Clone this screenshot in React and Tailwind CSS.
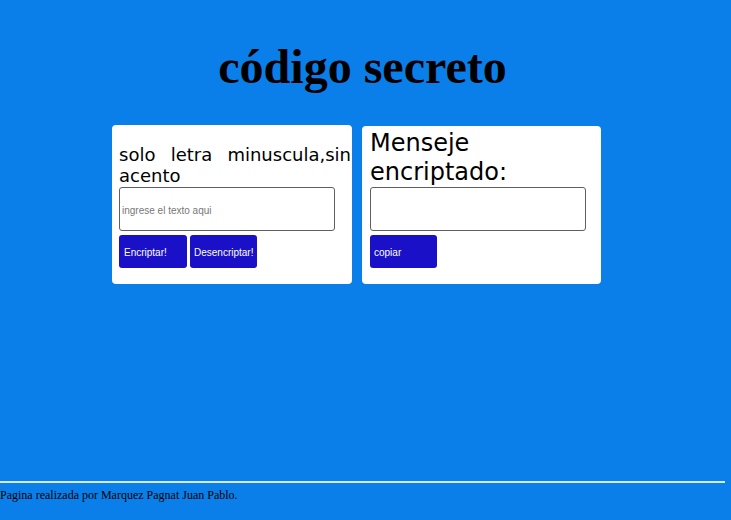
import React from "react";

export default function App() {
  return (
    <div className="w-[731px] h-[520px] bg-[#0b7fe9] flex flex-col overflow-hidden text-black">
      <h1 className="w-[725px] mt-[39px] text-center font-['Liberation_Serif',serif] font-bold text-[48px] leading-[55px]">
        código secreto
      </h1>

      <div className="flex items-start gap-[10px] ml-[112px] mt-[31px]">
        <div className="w-[240px] h-[159px] bg-white rounded-[4px] pl-[7px] pt-[19px]">
          <p className="w-[232px] text-justify font-['DejaVu_Sans',sans-serif] text-[18px] leading-[21px]">
            solo letra minuscula,sin acento
          </p>
          <input
            className="block mt-[1px] w-[216px] h-[44px] border border-[#5f5f5f] rounded-[3px] px-[2px] pt-[3px] font-['Liberation_Sans',sans-serif] text-[10px] placeholder:text-[#777] outline-none bg-white"
            placeholder="ingrese el texto aqui"
          />
          <div className="flex gap-[3px] mt-[4px]">
            <button className="w-[68px] h-[33px] bg-[#1a10c8] rounded-[3px] pl-[5px] pt-[2px] text-left text-white font-['Liberation_Sans',sans-serif] text-[10px]">
              Encriptar!
            </button>
            <button className="w-[67px] h-[33px] bg-[#1a10c8] rounded-[3px] pl-[4px] pt-[2px] text-left text-white font-['Liberation_Sans',sans-serif] text-[10px]">
              Desencriptar!
            </button>
          </div>
        </div>

        <div className="w-[239px] h-[158px] mt-[1px] bg-white rounded-[4px] pl-[8px] pt-[3px]">
          <h2 className="w-[224px] font-['DejaVu_Sans',sans-serif] text-[24px] leading-[29px] font-normal">
            Menseje encriptado:
          </h2>
          <div className="mt-0 w-[216px] h-[44px] border border-[#5f5f5f] rounded-[3px] bg-white" />
          <div className="flex mt-[4px]">
            <button className="w-[67px] h-[33px] bg-[#1a10c8] rounded-[3px] pl-[4px] pt-[2px] text-left text-white font-['Liberation_Sans',sans-serif] text-[10px]">
              copiar
            </button>
          </div>
        </div>
      </div>

      <footer className="mt-auto pb-[18px]">
        <div className="w-[725px] h-[2px] bg-[#d6ebff]" />
        <p className="mt-[5px] font-['Liberation_Serif',serif] text-[12px] leading-[14px]">
          Pagina realizada por Marquez Pagnat Juan Pablo.
        </p>
      </footer>
    </div>
  );
}
